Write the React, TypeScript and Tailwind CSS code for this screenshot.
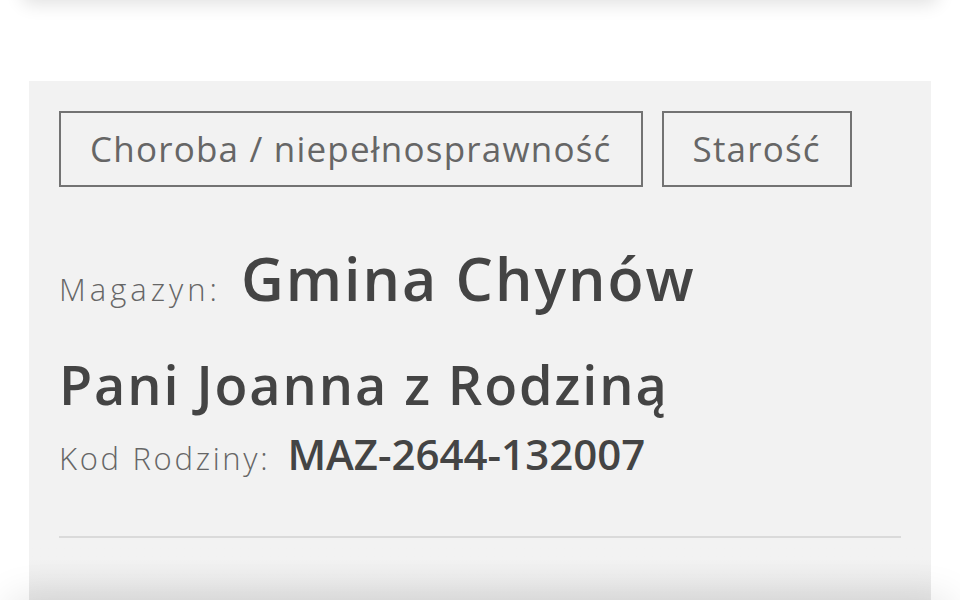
import React from 'react';

const tags = ['Choroba / niepełnosprawność', 'Starość'];

export default function App() {
  return (
    <div className="relative h-[600px] overflow-hidden bg-white font-['Open_Sans',sans-serif]">
      <div className="mx-[22px] -mt-[40px] h-[40px] rounded-b-lg bg-white shadow-[0_4px_18px_rgba(0,0,0,0.12)]" />

      <section className="mx-[29px] mt-[81px] bg-[#f2f2f2]">
        <div className="px-[30px] pt-[30px]">
          <div className="flex gap-[19px]">
            {tags.map((t) => (
              <div
                key={t}
                className="flex h-[76px] items-center border-2 border-[#737373] pl-[29px] pr-[29px] text-[35px] tracking-[1.2px] text-[#666]"
              >
                {t}
              </div>
            ))}
          </div>

          <div className="mt-[62px] flex items-baseline gap-[20px]">
            <span className="text-[31px] font-light tracking-[4px] text-[#666]">Magazyn:</span>
            <span className="text-[59px] font-semibold leading-none tracking-[2px] text-[#444]">Gmina Chynów</span>
          </div>

          <h2 className="mt-[44px] text-[54px] font-semibold leading-none tracking-[1.9px] text-[#444]">
            Pani Joanna z Rodziną
          </h2>

          <div className="mt-[22px] flex items-baseline gap-[17px]">
            <span className="text-[31px] font-light tracking-[2.7px] text-[#666]">Kod Rodziny:</span>
            <span className="text-[42px] font-semibold leading-none text-[#444]">MAZ-2644-132007</span>
          </div>

          <div className="mt-[55px] h-[2px] bg-[#dadada]" />
        </div>
        <div className="h-[70px] bg-gradient-to-b from-[#f2f2f2] from-30% to-[#e5e5e5]" />
      </section>

      <div className="absolute inset-x-[10px] -bottom-[40px] h-[40px] shadow-[0_0_40px_rgba(0,0,0,0.12)]" />
    </div>
  );
}
